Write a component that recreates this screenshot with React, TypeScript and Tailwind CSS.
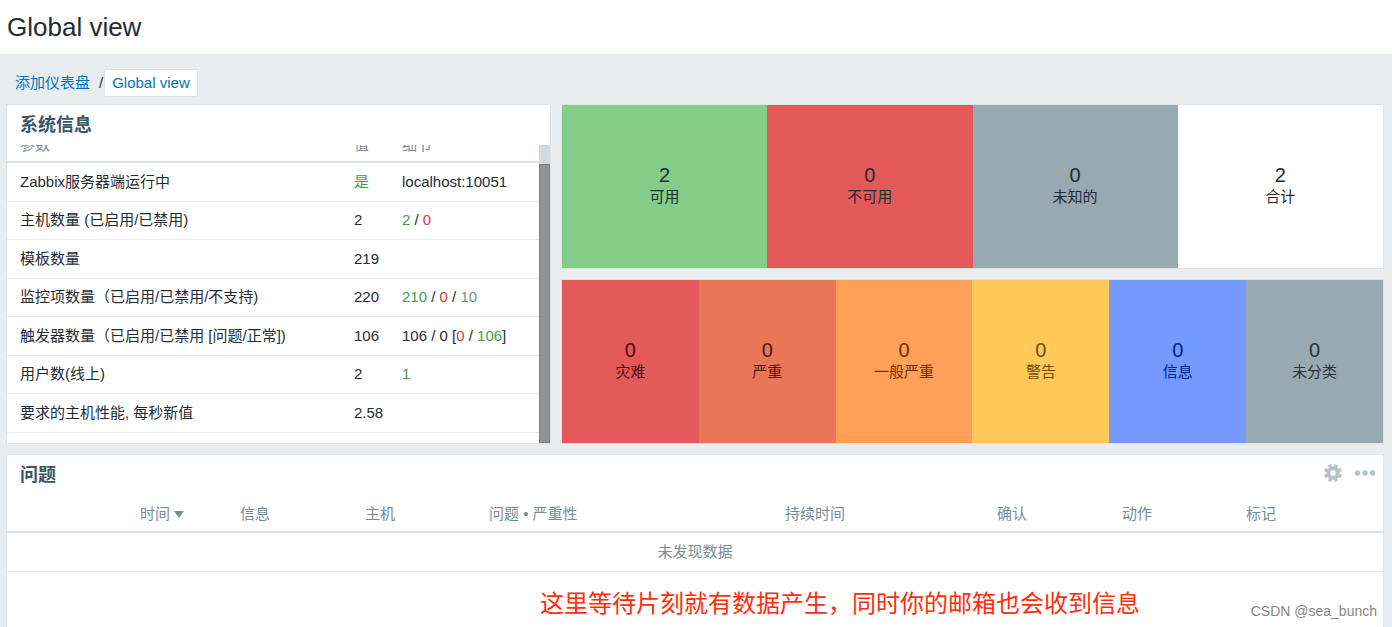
import type { ReactNode } from 'react';
import clsx from 'clsx';

type Tile = {
  label: string;
  count: number;
  className: string;
};

type InfoRow = {
  name: string;
  value: ReactNode;
  details?: ReactNode;
};

const HOST_TILES: Tile[] = [
  { label: '可用', count: 2, className: 'bg-[#86cc89] text-[#1f2c33]' },
  { label: '不可用', count: 0, className: 'bg-[#e45959] text-[#1f2c33]' },
  { label: '未知的', count: 0, className: 'bg-[#97a9b1] text-[#1f2c33]' },
  { label: '合计', count: 2, className: 'bg-white text-[#1f2c33]' },
];

const SEVERITY_TILES: Tile[] = [
  { label: '灾难', count: 0, className: 'bg-[#e45959] text-[#4b0c0c]' },
  { label: '严重', count: 0, className: 'bg-[#e97659] text-[#52190b]' },
  { label: '一般严重', count: 0, className: 'bg-[#ffa059] text-[#733100]' },
  { label: '警告', count: 0, className: 'bg-[#ffc859] text-[#734d00]' },
  { label: '信息', count: 0, className: 'bg-[#7499ff] text-[#00268e]' },
  { label: '未分类', count: 0, className: 'bg-[#97a9b1] text-[#2c3438]' },
];

const Green = ({ children }: { children: ReactNode }) => (
  <span className="text-[#429e47]">{children}</span>
);

const Red = ({ children }: { children: ReactNode }) => (
  <span className="text-[#e33734]">{children}</span>
);

const Grey = ({ children }: { children: ReactNode }) => (
  <span className="text-[#768d99]">{children}</span>
);

const INFO_ROWS: InfoRow[] = [
  { name: 'Zabbix服务器端运行中', value: <Green>是</Green>, details: 'localhost:10051' },
  {
    name: '主机数量 (已启用/已禁用)',
    value: 2,
    details: (
      <>
        <Green>2</Green> / <Red>0</Red>
      </>
    ),
  },
  { name: '模板数量', value: 219 },
  {
    name: '监控项数量（已启用/已禁用/不支持)',
    value: 220,
    details: (
      <>
        <Green>210</Green> / <Red>0</Red> / <Grey>10</Grey>
      </>
    ),
  },
  {
    name: '触发器数量（已启用/已禁用 [问题/正常])',
    value: 106,
    details: (
      <>
        106 / 0 [<Red>0</Red> / <Green>106</Green>]
      </>
    ),
  },
  { name: '用户数(线上)', value: 2, details: <Green>1</Green> },
  { name: '要求的主机性能, 每秒新值', value: '2.58' },
];

const PROBLEM_COLUMNS = ['信息', '主机', '问题 • 严重性', '持续时间', '确认', '动作', '标记'];

const TEETH = [0, 45, 90, 135, 180, 225, 270, 315];

function GearIcon() {
  return (
    <svg viewBox="0 0 18 18" className="size-[18px]" fill="none" stroke="currentColor">
      <circle cx="9" cy="9" r="4.7" strokeWidth="3.8" />
      {TEETH.map((angle) => (
        <path
          key={angle}
          d="M7 3.4 7.4 0h3.2l.4 3.4z"
          fill="currentColor"
          stroke="none"
          transform={`rotate(${angle + 22.5} 9 9)`}
        />
      ))}
    </svg>
  );
}

function DotsIcon() {
  return (
    <svg viewBox="0 0 22 18" className="h-[18px] w-[22px]" fill="currentColor">
      <circle cx="3.5" cy="9" r="2.8" />
      <circle cx="11" cy="9" r="2.8" />
      <circle cx="18.5" cy="9" r="2.8" />
    </svg>
  );
}

function TilePanel({ tiles }: { tiles: Tile[] }) {
  return (
    <section className="flex h-[165px] border border-[#dfe4e7] bg-white">
      {tiles.map((tile) => (
        <div
          key={tile.label}
          className={clsx('flex flex-1 flex-col items-center justify-center pb-[3px]', tile.className)}
        >
          <span className="text-[20px] leading-6">{tile.count}</span>
          <span className="leading-5">{tile.label}</span>
        </div>
      ))}
    </section>
  );
}

function SystemInfo() {
  return (
    <section className="flex h-[340px] flex-col border border-[#dfe4e7] bg-white">
      <h2 className="h-10 shrink-0 px-[13px] text-[18px] leading-10 font-bold text-[#3c5563]">
        系统信息
      </h2>
      <div className="flex min-h-0 flex-1">
        <div className="flex-1 overflow-hidden">
          {/* table is scrolled a little, so its head is partly cut */}
          <table className="-mt-[23px] w-full table-fixed border-collapse text-left">
            <colgroup>
              <col className="w-[334px]" />
              <col className="w-[48px]" />
              <col />
            </colgroup>
            <thead>
              <tr className="h-10 border-b-2 border-[#dce2e5] text-[#768d99]">
                <th className="pt-[6px] pl-[13px] font-normal">参数</th>
                <th className="pt-[6px] pl-[13px] font-normal">值</th>
                <th className="pt-[6px] pl-[13px] font-normal">细节</th>
              </tr>
            </thead>
            <tbody>
              {INFO_ROWS.map((row) => (
                <tr key={row.name} className="border-b border-[#ebeef0] odd:h-[39px] even:h-[38px]">
                  <td className="pl-[13px] whitespace-nowrap">{row.name}</td>
                  <td className="pl-[13px]">{row.value}</td>
                  <td className="pl-[13px] whitespace-nowrap">{row.details}</td>
                </tr>
              ))}
            </tbody>
          </table>
        </div>
        <div className="flex w-[11px] flex-col bg-[#d1dadf] pt-[19px]">
          <div className="flex-1 border border-[#7d7e7f] bg-[#929394]" />
        </div>
      </div>
    </section>
  );
}

function Problems() {
  return (
    <section className="flex-1 border border-b-0 border-[#dfe4e7] bg-white">
      <div className="flex h-10 items-center justify-between pr-[7px] pl-[13px]">
        <h2 className="text-[18px] font-bold text-[#3c5563]">问题</h2>
        <div className="flex gap-3 pb-1 text-[#b6c3ca]">
          <button type="button" aria-label="编辑">
            <GearIcon />
          </button>
          <button type="button" aria-label="更多">
            <DotsIcon />
          </button>
        </div>
      </div>
      <table className="w-full table-fixed border-collapse text-left text-[#768d99]">
        <colgroup>
          <col className="w-[233px]" />
          <col className="w-[125px]" />
          <col className="w-[124px]" />
          <col className="w-[296px]" />
          <col className="w-[212px]" />
          <col className="w-[125px]" />
          <col className="w-[124px]" />
          <col />
        </colgroup>
        <thead>
          <tr className="h-[37px] border-b-2 border-[#dce2e5]">
            <th className="pt-px pl-[133px] font-normal">
              <a href="#time" className="flex items-center gap-1">
                时间
                <svg viewBox="0 0 10 7" className="mt-[2px] h-[7px] w-[10px]" fill="currentColor">
                  <path d="M0 0h10L5 7z" />
                </svg>
              </a>
            </th>
            {PROBLEM_COLUMNS.map((column) => (
              <th key={column} className="pt-px font-normal">
                {column}
              </th>
            ))}
          </tr>
        </thead>
        <tbody>
          <tr className="h-[39px] border-b border-[#ebeef0]">
            <td colSpan={8} className="text-center">
              未发现数据
            </td>
          </tr>
        </tbody>
      </table>
      <p className="pt-4 pl-[533px] text-[24px] leading-8 whitespace-nowrap text-[#ff2d0b]">
        这里等待片刻就有数据产生，同时你的邮箱也会收到信息
      </p>
    </section>
  );
}

export default function App() {
  return (
    <div className="relative flex min-h-screen flex-col bg-[#e9edf0] font-['Liberation_Sans','Noto_Sans_CJK_SC',sans-serif] text-[15px] leading-5 text-[#1f2c33]">
      <header className="h-[55px] border-b border-[#dfe4e7] bg-white px-[7px]">
        <h1 className="text-[26px] leading-[54px]">Global view</h1>
      </header>

      <nav className="flex items-center pt-[14px] pb-[7px] pl-[15px]">
        <a href="#dashboards" className="text-[#0275b8]">
          添加仪表盘
        </a>
        <span className="pr-px pl-[9px]">/</span>
        <a
          href="#global"
          className="h-7 rounded-xs border border-[#dfe4e7] bg-white px-[7px] leading-[26px] text-[#0275b8]"
        >
          Global view
        </a>
      </nav>

      <main className="flex flex-1 flex-col gap-[10px] pr-2 pl-[6px]">
        <div className="grid grid-cols-[545fr_823fr] gap-[10px]">
          <SystemInfo />
          <div className="flex flex-col gap-[10px]">
            <TilePanel tiles={HOST_TILES} />
            <TilePanel tiles={SEVERITY_TILES} />
          </div>
        </div>
        <Problems />
      </main>

      <span className="absolute right-[15px] bottom-[6px] text-[14px] text-[#858585]">
        CSDN @sea_bunch
      </span>
    </div>
  );
}
